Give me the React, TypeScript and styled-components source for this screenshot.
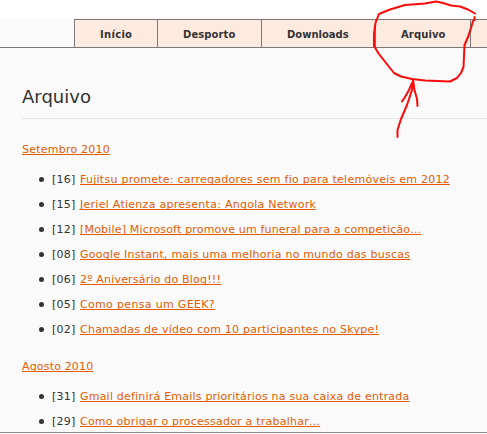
import React from "react";
import styled, { createGlobalStyle } from "styled-components";

const GlobalStyle = createGlobalStyle`
  * { box-sizing: border-box; }
  body {
    margin: 0;
    background: #fff;
    color: #333;
    font-family: "DejaVu Sans", Verdana, sans-serif;
    font-size: 11px;
    overflow: hidden;
  }
`;

const Page = styled.div`
  position: relative;
  width: 487px;
  height: 434px;
  padding-top: 18px;
  overflow: hidden;
`;

const Sheet = styled.div`
  height: 415px;
  padding-top: 1px;
  background: #fafafa;
  border-bottom: 1px solid #8c8c8c;
  overflow: hidden;
`;

const Nav = styled.nav`
  display: flex;
  height: 29px;
  padding-left: 74px;
  border-bottom: 1px solid #7c7678;
`;

const Tab = styled.a<{ $width: number; $tracking: number }>`
  flex: none;
  width: ${(p) => p.$width}px;
  height: 28px;
  padding-left: 25px;
  border-top: 1px solid #7c7678;
  border-left: 1px solid #7c7678;
  background: #ffeae0;
  font-size: 10px;
  font-weight: bold;
  line-height: 29px;
  letter-spacing: ${(p) => p.$tracking}px;
  white-space: nowrap;
`;

const Content = styled.main`
  padding-left: 22px;
`;

const Title = styled.h1`
  height: 71px;
  margin: 0;
  padding-top: 37px;
  border-bottom: 1px solid #e6e6e6;
  font-size: 18px;
  font-weight: normal;
  line-height: 24px;
`;

const Month = styled.section`
  padding-top: 18px;
`;

const MonthTitle = styled.h2`
  height: 25px;
  margin: 0 0 5px;
  font-size: 11px;
  font-weight: normal;
  line-height: 25px;
`;

const Posts = styled.ul`
  margin: 0 0 -6px;
  padding: 0;
  list-style: none;
`;

const Post = styled.li`
  display: flex;
  align-items: center;
  height: 25px;
  padding-left: 17px;
  line-height: 25px;
  white-space: nowrap;
`;

const Bullet = styled.span`
  width: 5px;
  height: 5px;
  margin-right: 8px;
  border-radius: 50%;
  background: #333;
`;

const Day = styled.span`
  width: 28px;
  letter-spacing: 0.25px;
`;

const Link = styled.a<{ $tracking: number }>`
  color: #e65c00;
  letter-spacing: ${(p) => p.$tracking}px;
  text-decoration: underline;
  text-decoration-thickness: 1px;
  text-underline-offset: 1px;
  text-decoration-skip-ink: none;
`;

const Marker = styled.svg`
  position: absolute;
  top: 0;
  left: 0;
  fill: none;
  stroke: #fb0a0a;
  stroke-width: 2;
  stroke-linecap: round;
  stroke-linejoin: round;
`;

const tabs = [
  { label: "Início", width: 83, tracking: 0.3 },
  { label: "Desporto", width: 104, tracking: 0.1 },
  { label: "Downloads", width: 114, tracking: 0 },
  { label: "Arquivo", width: 95, tracking: 0.12 },
  { label: "", width: 17, tracking: 0 },
];

const months = [
  {
    name: "Setembro 2010",
    tracking: 0.23,
    posts: [
      { day: 16, title: "Fujitsu promete: carregadores sem fio para telemóveis em 2012", tracking: 0.26 },
      { day: 15, title: "Jeriel Atienza apresenta: Angola Network", tracking: 0.27 },
      { day: 12, title: "[Mobile] Microsoft promove um funeral para a competição…", tracking: 0.18 },
      { day: 8, title: "Google Instant, mais uma melhoria no mundo das buscas", tracking: 0.24 },
      { day: 6, title: "2º Aniversário do Blog!!!", tracking: 0.2 },
      { day: 5, title: "Como pensa um GEEK?", tracking: 0.33 },
      { day: 2, title: "Chamadas de vídeo com 10 participantes no Skype!", tracking: 0.24 },
    ],
  },
  {
    name: "Agosto 2010",
    tracking: 0.17,
    posts: [
      { day: 31, title: "Gmail definirá Emails prioritários na sua caixa de entrada", tracking: 0.21 },
      { day: 29, title: "Como obrigar o processador a trabalhar…", tracking: 0.23 },
    ],
  },
];

export default function App() {
  return (
    <Page>
      <GlobalStyle />
      <Sheet>
        <Nav>
          {tabs.map((t, i) => (
            <Tab key={i} $width={t.width} $tracking={t.tracking}>{t.label}</Tab>
          ))}
        </Nav>
        <Content>
          <Title>Arquivo</Title>
          {months.map((m) => (
            <Month key={m.name}>
              <MonthTitle><Link $tracking={m.tracking}>{m.name}</Link></MonthTitle>
              <Posts>
                {m.posts.map((p) => (
                  <Post key={p.day}>
                    <Bullet />
                    <Day>[{String(p.day).padStart(2, "0")}]</Day>
                    <Link $tracking={p.tracking}>{p.title}</Link>
                  </Post>
                ))}
              </Posts>
            </Month>
          ))}
        </Content>
      </Sheet>
      <Marker width="487" height="150" viewBox="0 0 487 150">
        <path d="M475 13.5 L468 9.500 L460 6.500 L451 5.500 L443 3 L436 1.500 L425 3.500 L405 5 L390 9.500 L379 14 L375.500 23 L374 34 L374 46 L379 54 L386 63 L394 73 L401 76.500 L412 79 L425 80.500 L450 81.500 L457 78 L461 73 L463.500 67 L464.500 45 L468 37 L471 28 L473 21 L474.500 20 L474.500 17" />
        <path d="M413 80 L412 90 L407 105 L401 119 L397.500 130 L397.500 137" />
        <path d="M412 83 L409 90 L405 97 L402 101.500 M413 80 L414.500 90 L417 99 L417.500 106" />
      </Marker>
    </Page>
  );
}
